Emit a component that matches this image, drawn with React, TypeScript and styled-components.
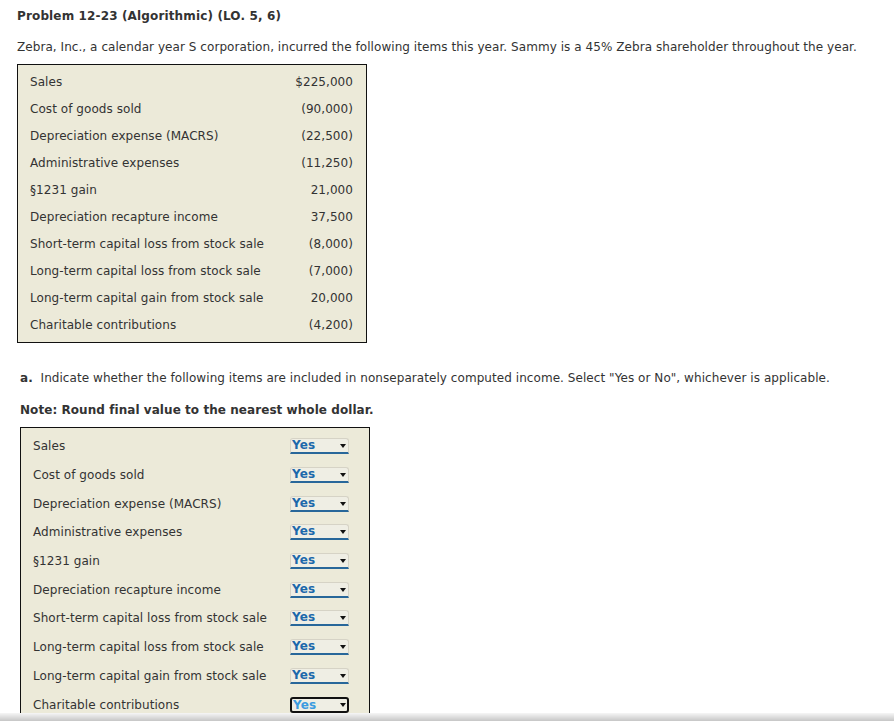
import React from 'react';
import styled, { createGlobalStyle } from 'styled-components';

const Global = createGlobalStyle`
  html, body { margin: 0; padding: 0; background: #fff; overflow: hidden; }
  body {
    font-family: Verdana, "DejaVu Sans", sans-serif;
    font-size: 12px;
    letter-spacing: 0.06px;
    color: #333;
  }
`;

const Page = styled.div`
  padding: 9px 0 0 17px;
`;

const Title = styled.h3`
  margin: 0;
  font-size: 12px;
  line-height: 15px;
  font-weight: bold;
  letter-spacing: 0.14px;
  color: #333;
`;

const Para = styled.p`
  margin: 16px 0 9px;
  line-height: 15px;
`;

const DataBox = styled.div`
  width: 348px;
  border: 1px solid #111;
  background: #ecead9;
  padding: 3px 0 4px;
`;

const DataRow = styled.div`
  display: flex;
  justify-content: space-between;
  align-items: center;
  height: 27px;
  padding: 0 13px 0 12px;
`;

const Section = styled.div`
  padding-left: 3px;
  margin-top: 28px;
`;

const Lead = styled.p`
  margin: 0;
  line-height: 15px;
`;

const Strong = styled.b`
  font-weight: bold;
`;

const Note = styled.p`
  margin: 17px 0 9px;
  line-height: 15px;
  font-weight: bold;
`;

const AnswerBox = styled.div`
  width: 348px;
  border: 1px solid #111;
  background: #ecead9;
  padding: 4px 0 3px;
`;

const AnswerRow = styled.div`
  display: flex;
  justify-content: space-between;
  align-items: center;
  height: 28.7px;
  padding: 0 20px 0 12px;
`;

const SelectWrap = styled.span`
  position: relative;
  display: inline-block;
  width: 59px;
  height: 16px;
  &::after {
    content: '';
    position: absolute;
    right: 3px;
    top: 6px;
    border-left: 3.5px solid transparent;
    border-right: 3.5px solid transparent;
    border-top: 4px solid #111;
    pointer-events: none;
  }
`;

const YesSelect = styled.select<{ $focused?: boolean }>`
  appearance: none;
  -webkit-appearance: none;
  box-sizing: border-box;
  width: 59px;
  height: 16px;
  margin: 0;
  padding: 0 0 0 1px;
  font-family: Verdana, "DejaVu Sans", sans-serif;
  font-size: 12px;
  font-weight: bold;
  letter-spacing: 0.1px;
  line-height: 13px;
  color: ${(p) => (p.$focused ? '#3b9be0' : '#1c68ab')};
  background: #efeee4;
  border: ${(p) => (p.$focused ? '2px solid #111' : '1px solid #d6d3c6')};
  border-bottom: ${(p) => (p.$focused ? '2px solid #111' : '2px solid #28679a')};
  border-radius: ${(p) => (p.$focused ? '3px' : '3px 3px 0 0')};
  outline: none;
`;

const BottomBar = styled.div`
  position: fixed;
  left: 0;
  right: 0;
  bottom: 0;
  height: 8px;
  background: linear-gradient(#f6f6f6, #c6c6c6);
`;

const items: [string, string][] = [
  ['Sales', '$225,000'],
  ['Cost of goods sold', '(90,000)'],
  ['Depreciation expense (MACRS)', '(22,500)'],
  ['Administrative expenses', '(11,250)'],
  ['§1231 gain', '21,000'],
  ['Depreciation recapture income', '37,500'],
  ['Short-term capital loss from stock sale', '(8,000)'],
  ['Long-term capital loss from stock sale', '(7,000)'],
  ['Long-term capital gain from stock sale', '20,000'],
  ['Charitable contributions', '(4,200)'],
];

export default function App() {
  return (
    <>
      <Global />
      <Page>
        <Title>Problem 12-23 (Algorithmic) (LO. 5, 6)</Title>
        <Para>
          Zebra, Inc., a calendar year S corporation, incurred the following items this year. Sammy is a 45% Zebra shareholder throughout the year.
        </Para>
        <DataBox>
          {items.map(([label, value]) => (
            <DataRow key={label}>
              <span>{label}</span>
              <span>{value}</span>
            </DataRow>
          ))}
        </DataBox>
        <Section>
          <Lead>
            <Strong>a.</Strong>&nbsp; Indicate whether the following items are included in nonseparately computed income. Select "Yes or No", whichever is applicable.
          </Lead>
          <Note>Note: Round final value to the nearest whole dollar.</Note>
          <AnswerBox>
            {items.map(([label], i) => (
              <AnswerRow key={label}>
                <span>{label}</span>
                <SelectWrap>
                  <YesSelect $focused={i === items.length - 1} defaultValue="Yes">
                    <option value="Yes">Yes</option>
                    <option value="No">No</option>
                  </YesSelect>
                </SelectWrap>
              </AnswerRow>
            ))}
          </AnswerBox>
        </Section>
      </Page>
      <BottomBar />
    </>
  );
}
